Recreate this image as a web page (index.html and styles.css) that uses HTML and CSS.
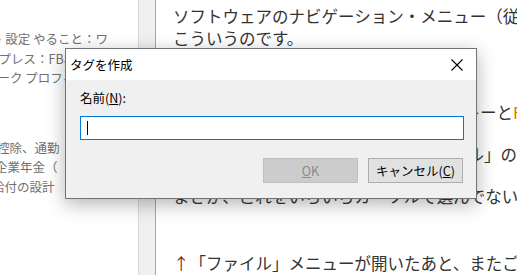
FILE: index.html
```html
<!DOCTYPE html>
<html lang="ja">
<head>
<meta charset="utf-8">
<link rel="stylesheet" href="styles.css">
</head>
<body>
<div class="page">
  <div class="left">
    <div class="group g1">
      <div class="ln l1">ト 設定 やること：ワ</div>
      <div class="ln l2">ドプレス：FB、ツイッター</div>
      <div class="ln l3">ワーク プロフィール</div>
    </div>
    <div class="group g2">
      <div class="ln l4">控除、通勤</div>
      <div class="ln l5">企業年金（</div>
      <div class="ln l6">給付の設計</div>
    </div>
  </div>
  <div class="divider"></div>
  <div class="main">
    <p class="p1">ソフトウェアのナビゲーション・メニュー（従来のメニュー）とは<br>こういうのです。</p>
    <p class="p2 rline">ファイルを開くショートカットはAltキーと<span class="hl tail">F</span></p>
    <p class="p3 rline">メニューから選べるのは「ファイル」の</p>
    <p class="p4">まさか、これをいちいちカーソルで選んでないですよね</p>
    <p class="p5"><span class="arrow">↑</span>「ファイル」メニューが開いたあと、またご</p>
  </div>
</div>

<div class="dialog">
  <div class="titlebar">
    <span class="title">タグを作成</span>
    <svg class="close" width="12" height="12" viewBox="0 0 12 12"><path d="M0.5 0.5 L11.5 11.5 M11.5 0.5 L0.5 11.5" stroke="#000" stroke-width="1.1" fill="none"/></svg>
  </div>
  <div class="body">
    <div class="label">名前<span class="acc">(<u>N</u>)</span>:</div>
    <div class="input"><span class="caret"></span></div>
    <div class="buttons">
      <div class="btn disabled"><u>O</u>K</div>
      <div class="btn">キャンセル(<u>C</u>)</div>
    </div>
  </div>
</div>
</body>
</html>
```
FILE: styles.css
```css
html, body {
  margin: 0;
  padding: 0;
}
body {
  width: 517px;
  height: 275px;
  overflow: hidden;
  position: relative;
  background: #fff;
  font-family: "Noto Sans CJK JP", "Noto Sans", sans-serif;
}
.page {
  display: flex;
  height: 275px;
}
.left {
  width: 138px;
  overflow: hidden;
  color: #707070;
  font-size: 12.5px;
  line-height: 19.5px;
  white-space: nowrap;
}
.g1 {
  margin-top: 29px;
}
.g2 {
  margin-top: 50px;
}
.l1 { margin-left: -10px; }
.l2 { margin-left: -14px; }
.l3 { margin-left: -15px; }
.l4 { margin-left: -3px; }
.l5 { margin-left: -5px; }
.l6 { margin-left: -8px; }
.divider {
  width: 16px;
  background: #eef0f1;
  border-left: 1px solid #d8d9da;
  border-right: 1px solid #a6a6a6;
}
.main {
  flex: 1;
  overflow: hidden;
  padding-left: 17px;
  color: #333;
  font-size: 16.5px;
  line-height: 22px;
  white-space: nowrap;
}
.main p {
  margin: 0;
}
.main .p1 {
  margin-top: 5px;
}
.rline {
  width: 340px;
  text-align: right;
}
.main .p2 {
  margin-top: 52px;
}
.main .p3 {
  margin-top: 20px;
  width: 344px;
}
.hl {
  color: #e07a00;
}
.tail {
  display: inline-block;
  width: 0;
  overflow: visible;
  text-align: left;
}
.main .p4 {
  margin-top: 20px;
}
.main .p5 {
  margin-top: 45px;
}
.arrow {
  color: #8b1a2a;
}

.dialog {
  position: absolute;
  left: 65px;
  top: 48px;
  width: 412px;
  height: 151px;
  box-sizing: border-box;
  border: 1px solid #6e7478;
  background: #f0f0f0;
  box-shadow: 0 5px 18px rgba(0, 0, 0, 0.3);
  display: flex;
  flex-direction: column;
  font-size: 12.5px;
  color: #000;
}
.titlebar {
  height: 31px;
  background: #fff;
  display: flex;
  align-items: center;
  justify-content: space-between;
  padding: 0 13px 0 4px;
  flex-shrink: 0;
}
.title {
  font-size: 12.5px;
  line-height: 16px;
}
.close {
  display: block;
}
.body {
  flex: 1;
  padding: 10px 12px 0 14px;
  display: flex;
  flex-direction: column;
}
.label {
  font-size: 12.5px;
  line-height: 16px;
  height: 16px;
}
.acc u, .btn u {
  text-decoration: underline;
  text-underline-offset: 1px;
}
.input {
  margin-top: 10px;
  height: 24px;
  box-sizing: border-box;
  border: 1px solid #0078d7;
  background: #fff;
  display: flex;
  align-items: center;
  padding-left: 6px;
}
.caret {
  display: block;
  width: 1px;
  height: 14px;
  background: #000;
}
.buttons {
  margin-top: 18px;
  display: flex;
  justify-content: flex-end;
  gap: 10px;
  padding-right: 1px;
}
.btn {
  width: 95px;
  height: 25px;
  box-sizing: border-box;
  border: 1px solid #adadad;
  background: #e1e1e1;
  display: flex;
  align-items: center;
  justify-content: center;
  font-size: 12.5px;
}
.btn.disabled {
  background: #cccccc;
  border-color: #bfbfbf;
  color: #8a8a8a;
}
```
